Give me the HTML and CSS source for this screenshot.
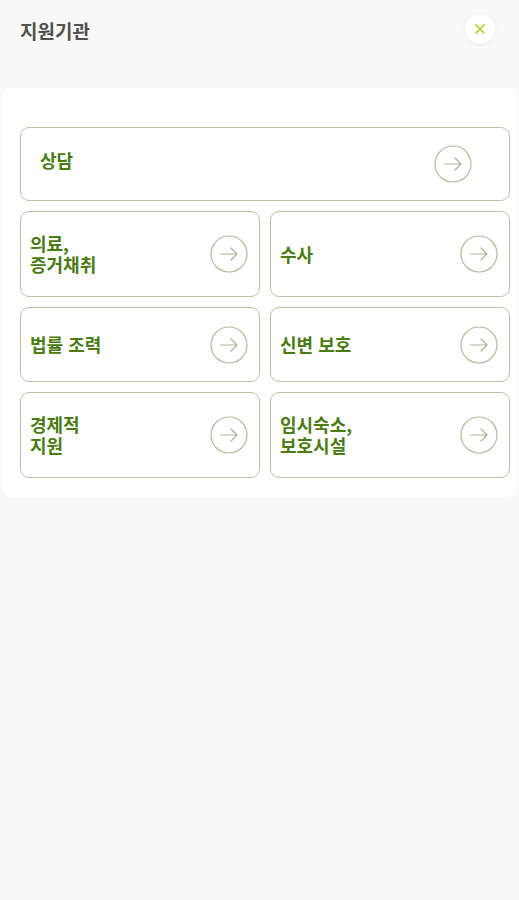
FILE: index.html
```html
<!DOCTYPE html>
<html lang="ko">
<head>
<meta charset="utf-8">
<title>지원기관</title>
<link rel="stylesheet" href="styles.css">
</head>
<body>
<header class="header">
  <h1 class="title">지원기관</h1>
  <button class="close" aria-label="닫기">
    <svg width="12" height="12" viewBox="0 0 12 12"><path d="M2 2L10 10M10 2L2 10" stroke="#bcd64a" stroke-width="1.8" stroke-linecap="round"/></svg>
  </button>
</header>
<main class="panel">
  <a class="card card-wide"><span class="label label-wide">상담</span><svg class="arrow" width="38" height="38" viewBox="0 0 38 38"><circle cx="19" cy="19" r="18" fill="none" stroke="#b7ba9d" stroke-width="1.2"/><path d="M10.5 19H27M21 13L27 19L21 25" fill="none" stroke="#aeb294" stroke-width="1.2" stroke-linecap="round" stroke-linejoin="round"/></svg></a>
  <div class="grid">
    <a class="card"><span class="label"><span class="line">의료,</span><span class="line">증거채취</span></span><svg class="arrow" width="38" height="38" viewBox="0 0 38 38"><circle cx="19" cy="19" r="18" fill="none" stroke="#b7ba9d" stroke-width="1.2"/><path d="M10.5 19H27M21 13L27 19L21 25" fill="none" stroke="#aeb294" stroke-width="1.2" stroke-linecap="round" stroke-linejoin="round"/></svg></a>
    <a class="card"><span class="label">수사</span><svg class="arrow" width="38" height="38" viewBox="0 0 38 38"><circle cx="19" cy="19" r="18" fill="none" stroke="#b7ba9d" stroke-width="1.2"/><path d="M10.5 19H27M21 13L27 19L21 25" fill="none" stroke="#aeb294" stroke-width="1.2" stroke-linecap="round" stroke-linejoin="round"/></svg></a>
    <a class="card"><span class="label">법률 조력</span><svg class="arrow" width="38" height="38" viewBox="0 0 38 38"><circle cx="19" cy="19" r="18" fill="none" stroke="#b7ba9d" stroke-width="1.2"/><path d="M10.5 19H27M21 13L27 19L21 25" fill="none" stroke="#aeb294" stroke-width="1.2" stroke-linecap="round" stroke-linejoin="round"/></svg></a>
    <a class="card"><span class="label">신변 보호</span><svg class="arrow" width="38" height="38" viewBox="0 0 38 38"><circle cx="19" cy="19" r="18" fill="none" stroke="#b7ba9d" stroke-width="1.2"/><path d="M10.5 19H27M21 13L27 19L21 25" fill="none" stroke="#aeb294" stroke-width="1.2" stroke-linecap="round" stroke-linejoin="round"/></svg></a>
    <a class="card"><span class="label"><span class="line">경제적</span><span class="line">지원</span></span><svg class="arrow" width="38" height="38" viewBox="0 0 38 38"><circle cx="19" cy="19" r="18" fill="none" stroke="#b7ba9d" stroke-width="1.2"/><path d="M10.5 19H27M21 13L27 19L21 25" fill="none" stroke="#aeb294" stroke-width="1.2" stroke-linecap="round" stroke-linejoin="round"/></svg></a>
    <a class="card"><span class="label"><span class="line">임시숙소,</span><span class="line">보호시설</span></span><svg class="arrow" width="38" height="38" viewBox="0 0 38 38"><circle cx="19" cy="19" r="18" fill="none" stroke="#b7ba9d" stroke-width="1.2"/><path d="M10.5 19H27M21 13L27 19L21 25" fill="none" stroke="#aeb294" stroke-width="1.2" stroke-linecap="round" stroke-linejoin="round"/></svg></a>
  </div>
</main>
</body>
</html>
```
FILE: styles.css
```css
* { box-sizing: border-box; }
html, body {
  margin: 0;
  padding: 0;
  background: #f9f9f9;
  font-family: "Noto Sans CJK KR", "Noto Sans", sans-serif;
}
.header {
  height: 60px;
  display: flex;
  align-items: center;
  justify-content: space-between;
  padding: 0 24px 0 20px;
}
.title {
  margin: 0;
  font-size: 19px;
  font-weight: 700;
  color: #505050;
}
.close {
  width: 30px;
  height: 30px;
  border: none;
  border-radius: 50%;
  background: #ffffff;
  box-shadow: 0 1px 4px rgba(0,0,0,0.06);
  display: flex;
  align-items: center;
  justify-content: center;
  padding: 0;
  margin-top: -2px;
}
.panel {
  margin: 28px 2px 0 2px;
  background: #ffffff;
  border-radius: 10px;
  padding: 39px 7px 19px 18px;
  display: flex;
  flex-direction: column;
  gap: 10px;
}
.grid {
  display: grid;
  grid-template-columns: 1fr 1fr;
  gap: 10px;
}
.card {
  display: flex;
  align-items: center;
  justify-content: space-between;
  border: 1px solid #bdc0a6;
  border-radius: 9px;
  padding: 17.5px 11px 17.5px 9px;
  color: #4b7b12;
  text-decoration: none;
}
.card-wide {
  padding: 17px 37px 17px 19px;
}
.label {
  font-size: 18px;
  font-weight: 700;
  line-height: 21px;
  padding: 3.5px 0;
  display: flex;
  flex-direction: column;
}
.line {
  display: block;
  line-height: 21px;
}
.label-wide {
  padding: 0 0 8px 0;
}
.arrow {
  flex: none;
  display: block;
}
```
